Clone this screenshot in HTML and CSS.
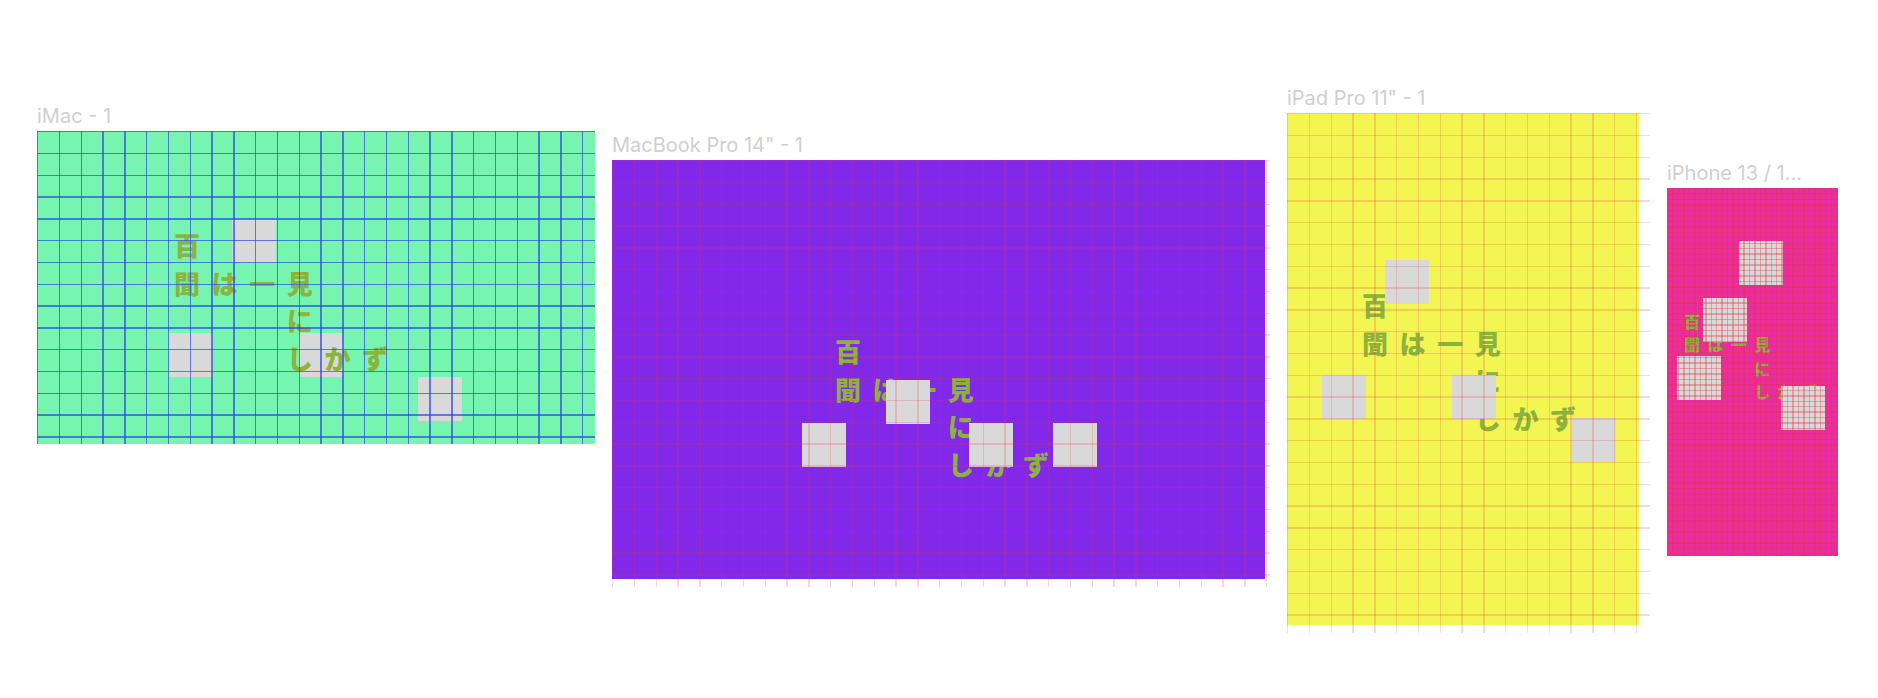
FILE: index.html
```html
<!DOCTYPE html>
<html lang="ja">
<head>
  <meta charset="UTF-8">
  <title>Frames</title>
  <link rel="stylesheet" href="styles.css">
</head>
<body>

  <div class="frame imac">
    <div class="label">iMac - 1</div>
    <div class="sq sq-a"></div>
    <div class="sq sq-b"></div>
    <div class="sq sq-c"></div>
    <div class="sq sq-d"></div>
    <div class="poem">
      <div>百</div>
      <div>聞は一見</div>
      <div class="indent">に</div>
      <div class="indent">しかず</div>
    </div>
    <div class="grid"></div>
  </div>

  <div class="frame macbook">
    <div class="label">MacBook Pro 14" - 1</div>
    <div class="poem">
      <div>百</div>
      <div>聞は一見</div>
      <div class="indent">に</div>
      <div class="indent">しかず</div>
    </div>
    <div class="sq sq-a"></div>
    <div class="sq sq-b"></div>
    <div class="sq sq-c"></div>
    <div class="sq sq-d"></div>
    <div class="grid"></div>
  </div>

  <div class="frame ipad">
    <div class="label">iPad Pro 11" - 1</div>
    <div class="poem">
      <div>百</div>
      <div>聞は一見</div>
      <div class="indent">に</div>
      <div class="indent">しかず</div>
    </div>
    <div class="sq sq-a"></div>
    <div class="sq sq-b"></div>
    <div class="sq sq-c"></div>
    <div class="sq sq-d"></div>
    <div class="grid"></div>
  </div>

  <div class="frame iphone">
    <div class="label">iPhone 13 / 1...</div>
    <div class="poem">
      <div>百</div>
      <div>聞は一見</div>
      <div class="indent">に</div>
      <div class="indent">しかず</div>
    </div>
    <div class="sq sq-a"></div>
    <div class="sq sq-b"></div>
    <div class="sq sq-c"></div>
    <div class="sq sq-d"></div>
    <div class="grid"></div>
  </div>

</body>
</html>
```

FILE: styles.css
```css
html, body {
  margin: 0;
  height: 100%;
  background-color: #fff;
  overflow: hidden;
}

/* frames sit on a free canvas, like the design tool they come from */
.frame {
  position: absolute;
  --pitch: 37.6px;
  --cell: 21.8px;
  --line: rgba(230, 50, 60, 0.2);
  --over-x: 0px;
  --over-y: 0px;
}

.label {
  position: absolute;
  left: 0;
  bottom: 100%;
  margin-bottom: 3px;
  font-family: Inter, "Liberation Sans", sans-serif;
  font-size: 20px;
  line-height: 24px;
  color: #cfcfcf;
  white-space: nowrap;
}

.sq {
  position: absolute;
  width: 43.5px;
  height: 43.5px;
  background-color: #d9d9d9;
}

.poem {
  position: absolute;
  font-family: "Noto Sans CJK JP", sans-serif;
  font-weight: 900;
  font-size: 26px;
  line-height: var(--pitch);
  letter-spacing: calc(var(--pitch) - 26px);
  color: #8cb33d;
  white-space: nowrap;
}

.indent {
  padding-left: calc(var(--pitch) * 3);
}

.grid {
  position: absolute;
  left: 0;
  top: 0;
  right: calc(var(--over-x) * -1);
  bottom: calc(var(--over-y) * -1);
  background-image:
    repeating-linear-gradient(to right, var(--line) 0, var(--line) 1.4px, transparent 1.4px, transparent var(--cell)),
    repeating-linear-gradient(to bottom, var(--line) 0, var(--line) 1.4px, transparent 1.4px, transparent var(--cell));
}

/* iMac */
.imac {
  left: 37px;
  top: 131px;
  width: 558px;
  height: 313px;
  background-color: #76f5b0;
  --line: rgba(40, 70, 225, 0.68);
}
.imac .poem { left: 137px; top: 95px; }
.imac .sq-a { left: 195px; top: 88px; }
.imac .sq-b { left: 132px; top: 202px; }
.imac .sq-c { left: 262px; top: 202px; }
.imac .sq-d { left: 381px; top: 246px; }

/* MacBook */
.macbook {
  left: 612px;
  top: 160px;
  width: 653px;
  height: 419px;
  background-color: #8228e8;
  --over-x: 5px;
  --over-y: 8px;
}
.macbook .poem { left: 223px; top: 172px; }
.macbook .sq-a { left: 274px; top: 220px; }
.macbook .sq-b { left: 190px; top: 263px; }
.macbook .sq-c { left: 357px; top: 263px; }
.macbook .sq-d { left: 441px; top: 263px; }

/* iPad */
.ipad {
  left: 1287px;
  top: 113px;
  width: 352px;
  height: 512px;
  background-color: #f3f552;
  --over-x: 11px;
  --over-y: 8px;
}
.ipad .poem { left: 75px; top: 173px; }
.ipad .sq-a { left: 98px; top: 147px; }
.ipad .sq-b { left: 35px; top: 262px; }
.ipad .sq-c { left: 165px; top: 262px; }
.ipad .sq-d { left: 285px; top: 305px; }

/* iPhone, same poem at a smaller size and a much finer grid */
.iphone {
  left: 1667px;
  top: 188px;
  width: 171px;
  height: 368px;
  background-color: #e82ea0;
  --pitch: 23.4px;
  --cell: 5.45px;
  --line: rgba(230, 50, 60, 0.35);
}
.iphone .poem {
  left: 17px;
  top: 122px;
  font-size: 16px;
  letter-spacing: calc(var(--pitch) - 16px);
}
.iphone .sq-a { left: 72px; top: 53px; }
.iphone .sq-b { left: 36px; top: 110px; }
.iphone .sq-c { left: 10px; top: 168px; }
.iphone .sq-d { left: 114px; top: 198px; }
```
